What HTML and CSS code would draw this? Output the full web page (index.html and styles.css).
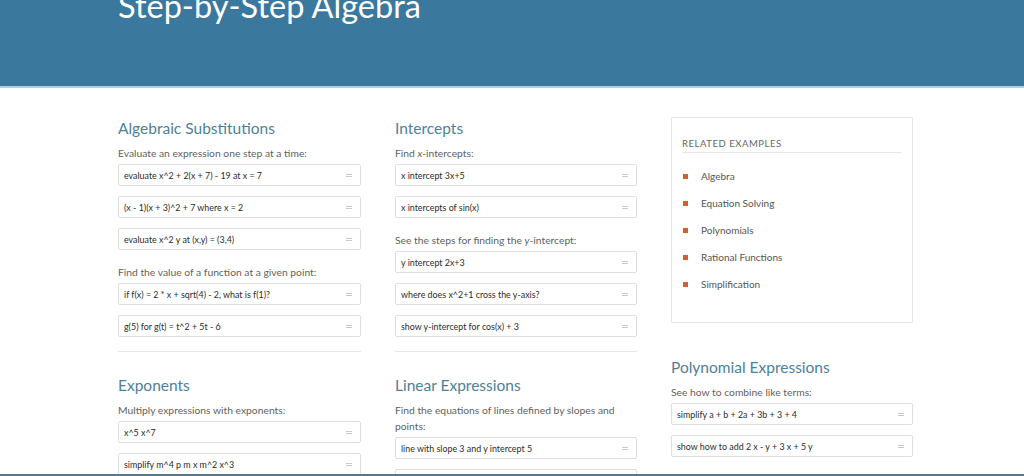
FILE: index.html
```html
<!DOCTYPE html>
<html lang="en">

<head>
  <meta charset="UTF-8" />
  <meta name="viewport" content="width=device-width, initial-scale=1.0" />
  <title>Step-by-Step Algebra</title>
  <link rel="stylesheet" href="styles.css">
</head>

<body>
  <div class="header">
    <h1>Step-by-Step Algebra</h1>
  </div>

  <div class="content">
    <div class="column">
      <h2>Algebraic Substitutions</h2>
      <p class="desc">Evaluate an expression one step at a time:</p>
      <div class="query"><span>evaluate x^2 + 2(x + 7) - 19 at x = 7</span><i class="eq"></i></div>
      <div class="query"><span>(x - 1)(x + 3)^2 + 7 where x = 2</span><i class="eq"></i></div>
      <div class="query"><span>evaluate x^2 y at (x,y) = (3,4)</span><i class="eq"></i></div>
      <p class="desc spaced">Find the value of a function at a given point:</p>
      <div class="query"><span>if f(x) = 2 * x + sqrt(4) - 2, what is f(1)?</span><i class="eq"></i></div>
      <div class="query"><span>g(5) for g(t) = t^2 + 5t - 6</span><i class="eq"></i></div>
      <hr>
      <h2>Exponents</h2>
      <p class="desc">Multiply expressions with exponents:</p>
      <div class="query"><span>x^5 x^7</span><i class="eq"></i></div>
      <div class="query"><span>simplify m^4 p m x m^2 x^3</span><i class="eq"></i></div>
    </div>

    <div class="column">
      <h2>Intercepts</h2>
      <p class="desc">Find <em>x</em>-intercepts:</p>
      <div class="query"><span>x intercept 3x+5</span><i class="eq"></i></div>
      <div class="query"><span>x intercepts of sin(x)</span><i class="eq"></i></div>
      <p class="desc spaced">See the steps for finding the <em>y</em>-intercept:</p>
      <div class="query"><span>y intercept 2x+3</span><i class="eq"></i></div>
      <div class="query"><span>where does x^2+1 cross the y-axis?</span><i class="eq"></i></div>
      <div class="query"><span>show y-intercept for cos(x) + 3</span><i class="eq"></i></div>
      <hr>
      <h2>Linear Expressions</h2>
      <p class="desc">Find the equations of lines defined by slopes and points:</p>
      <div class="query"><span>line with slope 3 and y intercept 5</span><i class="eq"></i></div>
      <div class="query"><i class="eq"></i></div>
    </div>

    <div class="column">
      <div class="related">
        <h3>Related Examples</h3>
        <ul>
          <li>Algebra</li>
          <li>Equation Solving</li>
          <li>Polynomials</li>
          <li>Rational Functions</li>
          <li>Simplification</li>
        </ul>
      </div>
      <h2 class="after-box">Polynomial Expressions</h2>
      <p class="desc">See how to combine like terms:</p>
      <div class="query"><span>simplify a + b + 2a + 3b + 3 + 4</span><i class="eq"></i></div>
      <div class="query"><span>show how to add 2 x - y + 3 x + 5 y</span><i class="eq"></i></div>
    </div>
  </div>

  <div class="taskbar"></div>
</body>

</html>
```

FILE: styles.css
```css
body {
  margin: 0;
  font-family: "Lato", "Open Sans", sans-serif;
  background: white;
  height: 476px;
  overflow: hidden;
}

.header {
  height: 86px;
  background-color: #3b789e;
  border-bottom: 2px solid #a9d3e2;
  overflow: hidden;
}

h1 {
  margin: -12px 0 0 118px;
  font-size: 32.5px;
  font-weight: normal;
  line-height: 36px;
  color: white;
}

.content {
  display: grid;
  grid-template-columns: 243px 242px 242px;
  gap: 34px;
  margin-left: 118px;
  padding-top: 29px;
}

h2 {
  margin: 0;
  font-size: 15.5px;
  font-weight: normal;
  line-height: 22px;
  color: #4e8199;
}

.desc {
  margin: 6px 0 3px;
  font-size: 10.3px;
  line-height: 16px;
  color: #5f5f5f;
}

.desc.spaced {
  margin-top: 14px;
}

.query {
  display: flex;
  align-items: center;
  justify-content: space-between;
  height: 20px;
  padding: 0 8px 0 5px;
  margin-bottom: 10px;
  border: 1px solid #dedede;
  border-radius: 2px;
  font-size: 8.9px;
  color: #2b2b2b;
}

.eq {
  width: 6px;
  height: 1px;
  margin-left: auto;
  border-top: 1px solid #c9c9c9;
  border-bottom: 1px solid #c9c9c9;
}

hr {
  margin: 14px 0 22px;
  border: none;
  border-top: 1px solid #e6e6e6;
}

.related {
  height: 185px;
  padding: 19px 10px 0;
  border: 1px solid #e6e6e6;
}

h3 {
  margin: 0;
  padding-bottom: 1px;
  font-size: 9.5px;
  font-weight: normal;
  line-height: 14px;
  letter-spacing: 0.55px;
  text-transform: uppercase;
  color: #666;
  border-bottom: 1px solid #e6e6e6;
}

ul {
  margin: 16px 0 0;
  padding: 0;
}

li {
  list-style: none;
  display: flex;
  align-items: center;
  gap: 13px;
  margin-bottom: 13px;
  font-size: 10px;
  line-height: 14px;
  color: #555;
}

li::before {
  content: "";
  width: 5px;
  height: 5px;
  margin-left: 1px;
  background-color: #d3602a;
}

.after-box {
  margin-top: 33px;
}

.taskbar {
  position: fixed;
  left: 0;
  right: 0;
  bottom: 0;
  height: 2px;
  background: #58788e;
}
```
